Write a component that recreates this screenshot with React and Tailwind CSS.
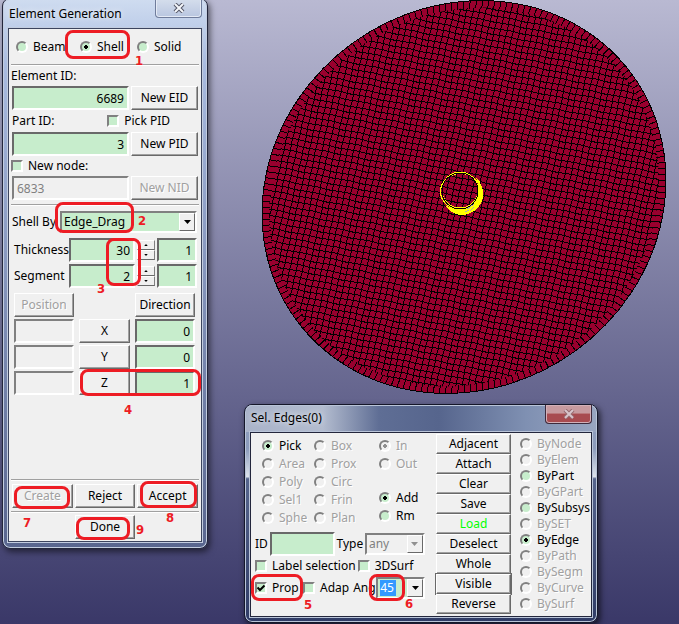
import React from "react";

const FIELD =
  "h-6 min-w-0 border-2 border-t-[#696969] border-l-[#696969] border-r-white border-b-white bg-[#c7edcc] px-[3px] text-right leading-5 outline-none disabled:border-t-[#808080] disabled:border-l-[#808080] disabled:bg-[#f0f0f0] disabled:text-left disabled:text-[#808080]";

const BUTTON =
  "border border-t-white border-l-white border-r-[#696969] border-b-[#696969] bg-[#f0f0f0] text-center leading-4 shadow-[inset_-1px_-1px_0_#a0a0a0] disabled:text-[#a0a0a0] disabled:[text-shadow:1px_1px_0_#fff]";

function Radio({ label, name, checked, disabled, className = "gap-[5px]" }) {
  return (
    <label
      className={`flex items-center ${disabled ? "text-[#a0a0a0] [text-shadow:1px_1px_0_#fff]" : ""} ${className}`}
    >
      <input
        type="radio"
        name={name}
        defaultChecked={checked}
        disabled={disabled}
        className="size-3 shrink-0 appearance-none rounded-full border-2 border-t-[#808080] border-l-[#808080] border-r-white border-b-white bg-[#c7edcc] checked:bg-[radial-gradient(circle,#000_2px,transparent_2px)] disabled:bg-[#f0f0f0] disabled:checked:bg-[radial-gradient(circle,#909090_2px,transparent_2px)]"
      />
      <span className="whitespace-nowrap">{label}</span>
    </label>
  );
}

function Check({ label, checked, className = "" }) {
  return (
    <label className={`flex items-center gap-[5px] ${className}`}>
      <span className="grid shrink-0 grid-cols-1 grid-rows-1">
        <input
          type="checkbox"
          defaultChecked={checked}
          className="col-start-1 row-start-1 size-3 appearance-none border-2 border-t-[#808080] border-l-[#808080] border-r-white border-b-white bg-[#c7edcc]"
        />
        {checked && (
          <svg viewBox="0 0 12 12" className="pointer-events-none col-start-1 row-start-1 size-3">
            <path d="M2.5 5.5 5 8l4.500-4.500" fill="none" stroke="#000" strokeWidth="2" />
          </svg>
        )}
      </span>
      <span className="whitespace-nowrap">{label}</span>
    </label>
  );
}

function Arrow({ up, small, dim }) {
  return (
    <svg
      viewBox="0 0 7 4"
      className={`mx-auto block ${small ? "h-0.5 w-1" : "h-1 w-[7px]"} ${up ? "rotate-180" : ""}`}
      fill={dim ? "#909090" : "#000"}
    >
      <path d="M0 0h7L3.500 4z" />
    </svg>
  );
}

function Spinner() {
  return (
    <div className="flex w-[18px] flex-col">
      {[true, false].map((up) => (
        <button
          key={String(up)}
          aria-label={up ? "Increase" : "Decrease"}
          className="h-[10px] border border-t-white border-l-white border-r-[#808080] border-b-[#696969] bg-[#f0f0f0]"
        >
          <Arrow up={up} small />
        </button>
      ))}
    </div>
  );
}

function Combo({ label, value, disabled, className = "" }) {
  return (
    <div
      className={`relative border-2 border-t-[#808080] border-l-[#808080] border-r-white border-b-white ${className}`}
    >
      <select
        aria-label={label}
        disabled={disabled}
        className="block size-full appearance-none bg-[#c7edcc] px-0.5 leading-4 disabled:bg-[#f0f0f0] disabled:text-[#808080] disabled:opacity-100"
      >
        <option>{value}</option>
      </select>
      <span className="pointer-events-none absolute inset-y-0 right-0 flex w-4 items-center border border-t-white border-l-white border-r-[#696969] border-b-[#696969] bg-[#f0f0f0]">
        <Arrow dim={disabled} />
      </span>
    </div>
  );
}

function Divider() {
  return <hr className="mx-0.5 h-0.5 border-0 border-t border-t-[#a0a0a0] bg-white" />;
}

function CloseGlyph({ dim }) {
  return (
    <svg viewBox="0 0 12 10" className="mx-auto block h-2.5 w-3">
      <path d="M2 1l8 8M10 1l-8 8" stroke={dim ? "#96696f" : "#535666"} strokeWidth="4" />
      <path d="M2 1l8 8M10 1l-8 8" stroke={dim ? "#d8c4cb" : "#f4f6fa"} strokeWidth="2" />
    </svg>
  );
}

function GenerationWindow() {
  return (
    <section className="absolute top-[-2px] left-[2px] w-[206px] rounded-lg border border-[#23263c] bg-linear-to-b from-[#cfdcf0] via-[#a9bbe0] via-12% to-[#59668f] px-[5px] pb-1.5 shadow-[inset_0_0_0_1px_#c3cde0,2px_3px_6px_#0008]">
      <header className="flex h-[29px] items-start justify-between">
        <h1 className="pt-[7px] pl-px text-[12px] leading-4 [text-shadow:0_0_6px_#fff]">Element Generation</h1>
        <button
          aria-label="Close"
          className="h-[19px] w-[47px] rounded-b border border-t-0 border-[#6f7c9b] bg-linear-to-b from-[#d5deec] to-[#b9c6e0] shadow-[inset_0_0_0_1px_#e4eaf5]"
        >
          <CloseGlyph />
        </button>
      </header>
      <div className="flex h-[514px] flex-col border border-[#3c445e] bg-[#f0f0f0] shadow-[0_0_0_1px_#c3cde0]">
        <div className="grid h-[35px] shrink-0 grid-cols-[64px_57px_1fr] items-center pl-[7px]">
          <Radio name="kind" label="Beam" />
          <Radio name="kind" label="Shell" checked />
          <Radio name="kind" label="Solid" />
        </div>
        <Divider />
        <div className="flex h-5 items-center pl-0.5">
          <label htmlFor="eid">Element ID:</label>
        </div>
        <div className="flex gap-0.5 px-[3px]">
          <input id="eid" className={`${FIELD} flex-1`} defaultValue="6689" />
          <button className={`${BUTTON} w-[67px]`}>New EID</button>
        </div>
        <div className="flex h-[22px] items-center justify-between pr-[31px] pl-[3px]">
          <label htmlFor="pid">Part ID:</label>
          <Check label="Pick PID" />
        </div>
        <div className="flex gap-0.5 px-[3px]">
          <input id="pid" className={`${FIELD} flex-1`} defaultValue="3" />
          <button className={`${BUTTON} w-[67px]`}>New PID</button>
        </div>
        <div className="flex h-5 items-center pl-0.5">
          <Check label="New node:" />
        </div>
        <div className="flex gap-0.5 px-[3px]">
          <input aria-label="Node ID" disabled className={`${FIELD} flex-1`} defaultValue="6833" />
          <button disabled className={`${BUTTON} w-[67px]`}>
            New NID
          </button>
        </div>
        <div className="h-1 shrink-0" />
        <Divider />
        <div className="flex h-[31px] shrink-0 items-center justify-between pr-1 pl-[3px]">
          <span className="whitespace-nowrap">Shell By</span>
          <Combo label="Shell By" value="Edge_Drag" className="h-[22px] w-[137px]" />
        </div>
        {[
          ["Thickness", "30"],
          ["Segment", "2"],
        ].map(([label, value]) => (
          <div key={label} className="flex h-[26px] items-center gap-0.5 pr-1 pl-[5px]">
            <label htmlFor={label} className="w-[53px] whitespace-nowrap">
              {label}
            </label>
            <input id={label} className={`${FIELD} flex-1`} defaultValue={value} />
            <Spinner />
            <input aria-label={`${label} factor`} className={`${FIELD} w-10`} defaultValue="1" />
          </div>
        ))}
        <div className="grid grid-cols-[60px_51px_60px] gap-x-[5px] gap-y-0.5 pt-1 pl-[5px]">
          <button disabled className={`${BUTTON} h-6`}>
            Position
          </button>
          <span />
          <button className={`${BUTTON} h-6`}>Direction</button>
          {[
            ["X", "0"],
            ["Y", "0"],
            ["Z", "1"],
          ].map(([axis, value]) => (
            <React.Fragment key={axis}>
              <input aria-label={`Position ${axis}`} disabled className={FIELD} />
              <button className={`${BUTTON} h-6`}>{axis}</button>
              <input aria-label={`Direction ${axis}`} className={FIELD} defaultValue={value} />
            </React.Fragment>
          ))}
        </div>
        <div className="mt-auto">
          <Divider />
          <div className="flex gap-0.5 px-[3px] py-[3px]">
            <button disabled className={`${BUTTON} h-6 flex-1`}>
              Create
            </button>
            <button className={`${BUTTON} h-6 flex-1`}>Reject</button>
            <button className={`${BUTTON} h-6 flex-1`}>Accept</button>
          </div>
          <Divider />
          <div className="flex justify-center py-0.5">
            <button className={`${BUTTON} h-6 w-[60px]`}>Done</button>
          </div>
        </div>
      </div>
    </section>
  );
}

const ACTIONS = ["Adjacent", "Attach", "Clear", "Save", "Load", "Deselect", "Whole", "Visible", "Reverse"];

const TARGETS = [
  "ByNode",
  "ByElem",
  "ByPart",
  "ByGPart",
  "BySubsys",
  "BySET",
  "ByEdge",
  "ByPath",
  "BySegm",
  "ByCurve",
  "BySurf",
];

function SelectionWindow() {
  return (
    <section className="absolute top-[404px] left-[244px] w-[354px] rounded-lg border border-[#15172a] bg-[linear-gradient(#8f9fbe_0,#8c9bbb_20%,#dde3ec_33%,#56658d_34%,#303c66_100%)] px-[5px] pb-[5px] shadow-[inset_0_0_0_1px_#b9c4d8,2px_3px_6px_#000a]">
      <header className="-mx-1 flex h-[27px] items-start justify-between rounded-t-md bg-[linear-gradient(90deg,#a9b3c9_0,#b3bccf_22%,#5f6e95_38%,#56658d_55%,#7f90b2_80%,#98a5c0_100%)] px-1 shadow-[inset_0_1px_0_#b9c4d8]">
        <h2 className="pt-[5px] pl-px text-[12px] leading-4 [text-shadow:0_0_6px_#fff]">Sel. Edges(0)</h2>
        <button
          aria-label="Close"
          className="h-[19px] w-[47px] rounded-b border border-t-0 border-[#3d2a3c] bg-linear-to-b from-[#c79a9f] from-45% to-[#a84b50] to-50% shadow-[inset_0_0_0_1px_#d2b0b8]"
        >
          <CloseGlyph dim />
        </button>
      </header>
      <div className="flex h-[185px] border border-[#23263c] bg-[#f0f0f0] shadow-[0_0_0_1px_#b9c4d8]">
        <div className="flex w-[185px] flex-col pl-1">
          <div className="grid grid-cols-[52px_65px_1fr] grid-rows-[repeat(5,18px)] pt-1 pl-[7px]">
            <Radio name="mode" label="Pick" checked />
            <Radio name="mode" label="Box" disabled />
            <Radio name="side" label="In" checked disabled />
            <Radio name="mode" label="Area" disabled />
            <Radio name="mode" label="Prox" disabled />
            <Radio name="side" label="Out" disabled />
            <Radio name="mode" label="Poly" disabled />
            <Radio name="mode" label="Circ" disabled />
            <span />
            <Radio name="mode" label="Sel1" disabled />
            <Radio name="mode" label="Frin" disabled />
            <Radio name="op" label="Add" checked className="-mt-1 gap-[5px]" />
            <Radio name="mode" label="Sphe" disabled />
            <Radio name="mode" label="Plan" disabled />
            <Radio name="op" label="Rm" className="-mt-1 gap-[5px]" />
          </div>
          <div className="mt-1.5 flex h-[22px] items-center justify-between pr-[11px]">
            <label htmlFor="edge-id">ID</label>
            <input id="edge-id" className={`${FIELD} w-[65px]`} />
            <span>Type</span>
            <Combo label="Type" value="any" disabled className="h-[22px] w-[60px]" />
          </div>
          <div className="flex h-[22px] items-center gap-0.5">
            <Check label="Label selection" />
            <Check label="3DSurf" />
          </div>
          <div className="flex h-[22px] items-center pr-[11px]">
            <Check label="Prop" checked className="w-[48px]" />
            <Check label="Adap" />
            <label htmlFor="angle" className="ml-1 w-[23px]">
              Ang
            </label>
            <div className="flex h-[22px] flex-1 items-center border-2 border-t-[#808080] border-l-[#808080] border-r-white border-b-white bg-[#c7edcc] pl-0.5">
              <input id="angle" className="h-4 w-4 bg-[#3399ff] text-white outline-none" defaultValue="45" />
              <button
                aria-label="Angle presets"
                className="ml-auto h-full w-4 border border-t-white border-l-white border-r-[#696969] border-b-[#696969] bg-[#f0f0f0]"
              >
                <Arrow />
              </button>
            </div>
          </div>
        </div>
        <div className="flex w-[75px] flex-col pt-px">
          {ACTIONS.map((action) => (
            <button
              key={action}
              className={`${BUTTON} h-5 ${action === "Load" ? "text-[#00ff00]" : ""} ${action === "Visible" ? "outline outline-[#696969]" : ""}`}
            >
              {action}
            </button>
          ))}
        </div>
        <div className="flex flex-1 flex-col pt-[3px] pl-[9px]">
          {TARGETS.map((target) => (
            <Radio
              key={target}
              name="target"
              label={target}
              checked={target === "ByEdge"}
              disabled={!["ByPart", "BySubsys", "ByEdge"].includes(target)}
              className="h-4 gap-[5px]"
            />
          ))}
        </div>
      </div>
    </section>
  );
}

// Node (i, j) of the quad mesh, snapped to whole pixels around the disc centre.
const node = (i, j) => `${Math.round(i * 6.1 - j * 1.3) + 0.5} ${Math.round(i * 1.2 + j * 6) + 0.5}`;
const SPAN = Array.from({ length: 91 }, (_, i) => i - 45);
const QUADS = SPAN.map(
  (a) => `M${SPAN.map((b) => node(a, b)).join("L")}M${SPAN.map((b) => node(b, a)).join("L")}`,
).join("");

// Short spokes of the outermost ring of elements.
const SPOKES = Array.from({ length: 204 }, (_, k) => {
  const t = (k / 204) * 2 * Math.PI;
  const x = 208 * Math.cos(t);
  const y = 190 * Math.sin(t);
  return `M${x * 0.96} ${y * 0.96}L${x} ${y}`;
}).join("");

function Mesh() {
  return (
    <svg viewBox="0 0 404 394" className="absolute top-0 left-[262px] h-[394px] w-[404px]" aria-hidden="true">
      <defs>
        <clipPath id="inner">
          <ellipse rx="201" ry="183" transform="translate(202 197) rotate(-36)" />
        </clipPath>
      </defs>
      <g shapeRendering="crispEdges">
        <g transform="translate(202 197) rotate(-36)">
          <ellipse rx="208" ry="190" fill="#99002e" stroke="#000" />
          <path d={SPOKES} stroke="#000" />
        </g>
        <g clipPath="url(#inner)">
          <path d={QUADS} transform="translate(202 197)" fill="none" stroke="#000" />
        </g>
        <path
          d="M178.500 191.500a20 18 0 1 0 40 0a20 18 0 1 0-40 0M180 190a18 18 0 1 0 36 0a18 18 0 1 0-36 0"
          fill="none"
          stroke="#ff0"
        />
        <path
          d="M214 177C225 188 224 208 206 214C197 217 188 213 184 206C196 210 204 210 210 204C217 198 218 187 214 177Z"
          fill="#ff0"
        />
        <path d="M205 209l7-5M208 211l4-4M203 212l4-2" stroke="#aaa" />
        <circle cx="198" cy="191" r="18" fill="none" stroke="#000" />
      </g>
    </svg>
  );
}

const BOX = "pointer-events-none absolute rounded-lg border-[3px] border-[#ed1c24]";
const NUM =
  "pointer-events-none absolute font-['DejaVu_Sans_Condensed','DejaVu_Sans',sans-serif] text-[13px] font-bold leading-4 text-[#ed1c24]";

function Annotations() {
  return (
    <>
      <span className={`${BOX} top-[30px] left-[65px] h-[29px] w-[65px]`} />
      <span className={`${BOX} top-[202px] left-[55px] h-[31px] w-[79px]`} />
      <span className={`${BOX} top-[238px] left-[106px] h-[48px] w-[35px]`} />
      <span className={`${BOX} top-[369px] left-[80px] h-[27px] w-[121px]`} />
      <span className={`${BOX} top-[486px] left-[14px] h-[23px] w-[56px]`} />
      <span className={`${BOX} top-[481px] left-[140px] h-[27px] w-[57px]`} />
      <span className={`${BOX} top-[517px] left-[76px] h-[23px] w-[54px]`} />
      <span className={`${BOX} top-[574px] left-[251px] h-[27px] w-[52px]`} />
      <span className={`${BOX} top-[574px] left-[369px] h-[27px] w-[36px]`} />
      <span className={`${NUM} top-[53px] left-[135px]`}>1</span>
      <span className={`${NUM} top-[213px] left-[138px]`}>2</span>
      <span className={`${NUM} top-[281px] left-[97px]`}>3</span>
      <span className={`${NUM} top-[402px] left-[124px]`}>4</span>
      <span className={`${NUM} top-[597px] left-[304px]`}>5</span>
      <span className={`${NUM} top-[596px] left-[405px]`}>6</span>
      <span className={`${NUM} top-[515px] left-[23px]`}>7</span>
      <span className={`${NUM} top-[510px] left-[166px]`}>8</span>
      <span className={`${NUM} top-[522px] left-[136px]`}>9</span>
    </>
  );
}

export default function App() {
  return (
    <main className="relative min-h-screen overflow-hidden bg-linear-to-b from-[#b9b9d2] to-[#3a3868] font-['Noto_Sans','Open_Sans',sans-serif] text-[12px] leading-4 text-black">
      <Mesh />
      <GenerationWindow />
      <SelectionWindow />
      <Annotations />
    </main>
  );
}
